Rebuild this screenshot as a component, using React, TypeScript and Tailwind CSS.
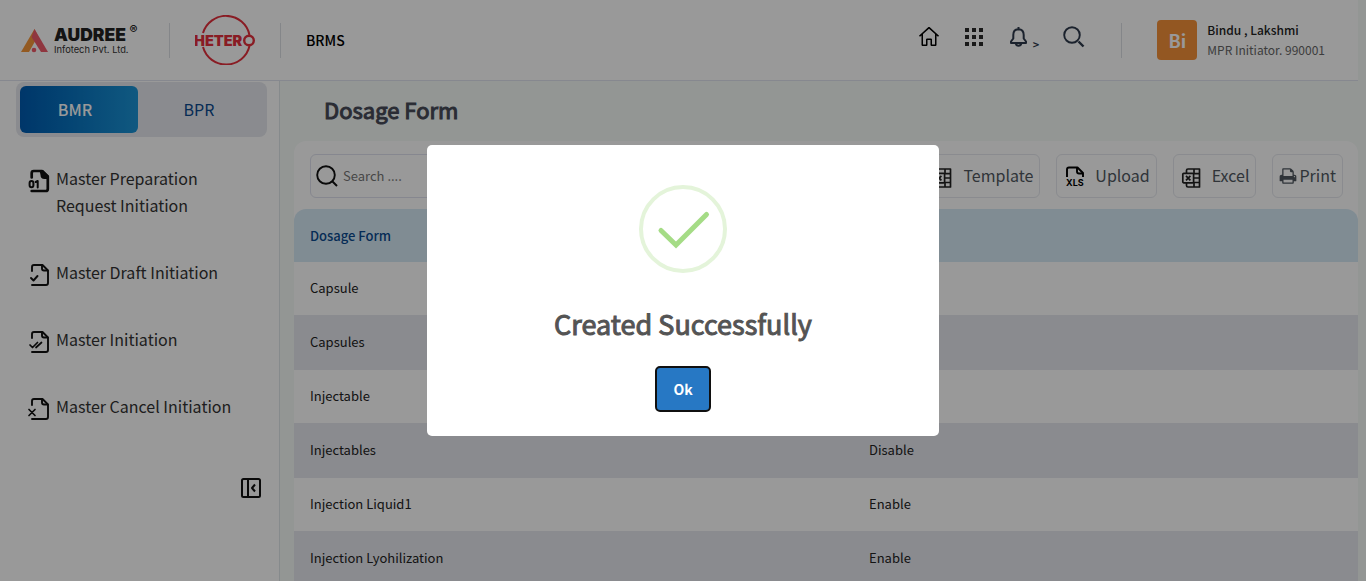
import type { ReactNode } from "react";
import { VscHome } from "react-icons/vsc";

const rows = [
  ["Capsule", "Enable"],
  ["Capsules", "Enable"],
  ["Injectable", "Enable"],
  ["Injectables", "Disable"],
  ["Injection Liquid1", "Enable"],
  ["Injection Lyohilization", "Enable"],
];

function FileIcon({ children, bold = false }: { children: ReactNode; bold?: boolean }) {
  return (
    <svg viewBox="0 0 24 24" className="mt-1 -mb-1 size-6 shrink-0 overflow-visible" fill="none" stroke="#111" strokeWidth="1.9" strokeLinejoin="round" strokeLinecap="round">
      {bold ? (
        <>
          <path d="M3.700 8.500V4Q3.700 2 5.700 2H14l5.800 5.500V20q0 2-2 2H3.700" strokeWidth="2.700" />
          <path d="M11.500 1H15L21 7v3h-4.500Q12.500 10 12.500 6Z" fill="#111" stroke="none" />
        </>
      ) : (
        <>
          <path d="M4 8V4Q4 2 6 2H14.500l5.500 5.500V20q0 2-2 2H4" />
          <path d="M14 2.500v3Q14 7.500 16 7.500H19.500" />
        </>
      )}
      {children}
    </svg>
  );
}

function ExcelIcon() {
  return (
    <svg viewBox="0 0 24 24" className="size-6" fill="none" stroke="#222" strokeWidth="1.7" strokeLinejoin="round">
      <path d="M6.500 9V6.500q0-1.500 1.500-1.500H19.500V23H8q-1.500 0-1.500-1.500V19" />
      <rect x="2.800" y="9.300" width="10.800" height="9.500" rx="1" />
      <path d="M14 5v4.500M14 18.500V23M13.600 9.600h5.900M13.600 14h5.900M13.600 18.500h5.900" />
      <path d="m6 11.800 4.400 4.500m0-4.500L6 16.300" />
    </svg>
  );
}

function XlsIcon() {
  return (
    <svg viewBox="0 0 24 24" className="size-6" fill="none" stroke="#000" strokeWidth="1.9" strokeLinejoin="round">
      <path d="M4 13V5.500Q4 3.500 6 3.500h8.500L20 9v4" />
      <path d="M14 3.500v4Q14 9.500 16 9.500h4" />
      <text x="3" y="22" fontFamily="Inter, sans-serif" fontWeight="700" fontSize="9" fill="#000" stroke="none">XLS</text>
    </svg>
  );
}

function PrintIcon() {
  return (
    <svg viewBox="0 0 1792 1792" className="size-[18px]" fill="currentColor">
      <path d="M448 1536h896v-256h-896v256zm0-640h896v-384h-160q-40 0-68-28t-28-68v-160h-640v640zm1152 64q0-26-19-45t-45-19-45 19-19 45 19 45 45 19 45-19 19-45zm128 0v416q0 13-9.500 22.500t-22.500 9.500h-224v160q0 40-28 68t-68 28h-960q-40 0-68-28t-28-68v-160h-224q-13 0-22.500-9.500t-9.500-22.500v-416q0-79 56.500-135.500t135.500-56.500h64v-544q0-40 28-68t68-28h672q40 0 88 20t76 48l152 152q28 28 48 76t20 88v256h64q79 0 135.500 56.500t56.500 135.500z" />
    </svg>
  );
}

function NavItem({ icon, children }: { icon: ReactNode; children: ReactNode }) {
  return (
    <li>
      <a href="#" className="flex items-start gap-1 text-base leading-[27px] text-[#333]">
        {icon}
        <span>{children}</span>
      </a>
    </li>
  );
}

function ToolButton({ icon, children, tight = false }: { icon: ReactNode; children: ReactNode; tight?: boolean }) {
  return (
    <button className={`flex h-11 items-center rounded-md border border-[#e6e8ee] px-1.5 text-base text-[#505860] ${tight ? "gap-0.5" : "gap-2"}`}>
      {icon}
      <span className="pb-0.5">{children}</span>
    </button>
  );
}

function AudreeLogo() {
  return (
    <svg viewBox="0 0 120 36" className="h-9 w-[120px]" role="img" aria-label="Audree Infotech">
      <path d="M14.500 7 1 30h8l9-16Z" fill="#f5973a" />
      <path d="M14.500 7 28 30h-7L11.500 15Z" fill="#ef5a6a" />
      <circle cx="14" cy="28" r="2.300" fill="#ef5a6a" />
      <text x="34" y="19" fontFamily="Inter, sans-serif" fontWeight="900" fontSize="17.500" fill="#222">AUDREE</text>
      <text x="34" y="31" fontFamily="Inter, sans-serif" fontSize="9.300" fill="#333">Infotech Pvt. Ltd.</text>
      <text x="109.500" y="11.500" fontFamily="Inter, sans-serif" fontWeight="600" fontSize="12" fill="#222">®</text>
    </svg>
  );
}

function HeteroLogo() {
  return (
    <svg viewBox="0 0 60 50" className="h-[50px] w-[60px]" role="img" aria-label="Hetero">
      <g fill="none" stroke="#e5303c" strokeWidth="2">
        <path d="M8 18A24 24 0 0 1 54.500 20M8 32A24 24 0 0 0 54.500 31" />
        <circle cx="54" cy="25.500" r="4.800" strokeWidth="2.400" />
      </g>
      <text x="-1" y="30.700" fontFamily="Inter, sans-serif" fontWeight="900" fontSize="14.500" fill="#e5303c">HETER</text>
    </svg>
  );
}

export default function App() {
  return (
    <div className="flex h-screen flex-col overflow-hidden bg-[#f5faf7] pr-2 font-['Noto_Sans_CJK_SC',sans-serif] text-[#222]">
      <header className="flex h-[81px] shrink-0 items-center border-b border-[#e0e3ee] bg-white pl-5">
        <AudreeLogo />
        <span className="ml-[29px] h-[35px] w-px bg-[#dcdfe4]" />
        <span className="ml-[25px]"><HeteroLogo /></span>
        <span className="ml-[25px] h-[35px] w-px bg-[#dcdfe4]" />
        <span className="ml-[25px] text-sm font-medium text-black">BRMS</span>
        <nav className="ml-auto flex items-center">
          <button aria-label="Home"><VscHome className="-mt-1.5 size-6 text-black" /></button>
          <button aria-label="Apps" className="ml-6">
            <svg viewBox="0 0 18 18" className="-mt-1.5 size-[18px]" fill="#2b2b2b">
              {[0, 7, 14].flatMap((y) => [0, 7, 14].map((x) => <rect key={`${x}-${y}`} x={x} y={y} width="4" height="4" />))}
            </svg>
          </button>
          <button aria-label="Notifications" className="ml-6 flex items-end gap-1 text-[#2e3a4c]">
            <svg viewBox="0 0 22 22" className="mb-1.5 size-[22px]" fill="none" stroke="currentColor" strokeWidth="2" strokeLinejoin="round">
              <path d="M11.500 3.200C8 3.200 6.300 5.600 6.300 9v3.500L4 15.500v1.400h15v-1.400l-2.300-3V9c0-3.400-1.700-5.800-5.200-5.800Z" />
              <path d="M11.500 1v2M8.700 17.500c.6 2.900 5 2.900 5.600 0" />
            </svg>
            <span className="pb-1 text-[11px] leading-3 font-bold">&gt;</span>
          </button>
          <button aria-label="Search" className="ml-6">
            <svg viewBox="0 0 22 22" className="-mt-1.5 size-[22px]" fill="none" stroke="#2e3a4c">
              <circle cx="9" cy="9" r="7.800" strokeWidth="1.900" />
              <path d="m15.500 15.500 5 5" strokeWidth="2.400" />
            </svg>
          </button>
        </nav>
        <span className="ml-9 h-[35px] w-px bg-[#dcdfe4]" />
        <div className="mr-[33px] ml-[35px] flex items-center gap-2.5">
          <span className="flex size-10 items-center justify-center rounded bg-[#f5923a] text-lg font-bold text-white">Bi</span>
          <div className="text-xs leading-5">
            <div className="font-medium text-[#222]">Bindu , Lakshmi</div>
            <div className="text-[#666]">MPR Initiator. 990001</div>
          </div>
        </div>
      </header>

      <div className="flex min-h-0 flex-1">
        <aside className="w-[280px] shrink-0 border-r border-[#e0e7ea] bg-white pt-px">
          <div className="mr-3 ml-4 flex h-[55px] rounded-lg bg-[#e6e8ee] p-1">
            <button className="w-[118px] rounded-md bg-linear-to-r from-[#005bb0] to-[#1b94d6] pr-2 pb-0.5 font-medium text-white">BMR</button>
            <button className="w-[122px] pb-0.5 text-[#0b4a8f]">BPR</button>
          </div>
          <ul className="mt-7 ml-7 w-52 space-y-10">
            <NavItem
              icon={
                <FileIcon bold>
                  <rect x="1.600" y="12" width="3.800" height="6.200" rx="1.900" strokeWidth="2" />
                  <path d="m7.700 13 2-1v6.500" strokeWidth="2" />
                </FileIcon>
              }
            >
              Master Preparation Request Initiation
            </NavItem>
            <NavItem icon={<FileIcon><path d="m3 15 2.500 2.500L9.500 13" /></FileIcon>}>Master Draft Initiation</NavItem>
            <NavItem icon={<FileIcon><path d="m2 15 2.500 2.500L9.500 12.500M8 17.500l5.500-5" strokeWidth="1.700" /></FileIcon>}>Master Initiation</NavItem>
            <NavItem icon={<FileIcon><path d="m1 12.500 6 6m0-6-6 6" strokeWidth="1.700" /></FileIcon>}>Master Cancel Initiation</NavItem>
          </ul>
          <div className="mt-14 flex justify-end pr-4">
            <button aria-label="Collapse menu">
              <svg viewBox="0 0 24 24" className="size-6" fill="none" stroke="#111" strokeWidth="2" strokeLinejoin="round">
                <rect x="3" y="3" width="18" height="18" rx="1.500" />
                <path d="M9 3v18m7-12.500L13 12l3 3.500" />
              </svg>
            </button>
          </div>
        </aside>

        <main className="min-w-0 flex-1 pl-3.5">
          <h1 className="pb-1 pl-[30px] text-[22px] leading-[56px] text-[#474a58] [-webkit-text-stroke:1px]">Dosage Form</h1>
          <section className="rounded-t-xl bg-white">
            <div className="flex items-center gap-4 pt-[13px] pr-[15px] pb-[11px] pl-4">
              <label className="mr-auto flex h-11 w-72 items-center gap-1 rounded-md border border-[#e0e2ee] px-1">
                <svg viewBox="0 0 24 24" className="size-6 shrink-0" fill="none" stroke="#111" strokeWidth="1.900">
                  <circle cx="11" cy="11" r="8.800" />
                  <path d="m17 17 5 5" />
                </svg>
                <input aria-label="Search" placeholder="Search ...." className="w-full min-w-0 text-[13px] outline-none placeholder:text-[#777]" />
              </label>
              <ToolButton icon={<ExcelIcon />}>Template</ToolButton>
              <ToolButton icon={<XlsIcon />}>Upload</ToolButton>
              <ToolButton icon={<ExcelIcon />}>Excel</ToolButton>
              <ToolButton tight icon={<PrintIcon />}>Print</ToolButton>
            </div>
            <table className="w-full table-fixed border-separate border-spacing-0 text-left text-[13px]">
              <thead>
                <tr className="h-[53px] text-[#0b4a8f]">
                  <th className="w-[559px] rounded-tl-xl bg-[#d6eaf6] px-4 font-medium">Dosage Form</th>
                  <th className="rounded-tr-xl bg-[#d6eaf6] px-4 font-medium">Status</th>
                </tr>
              </thead>
              <tbody>
                {rows.map(([name, status]) => (
                  <tr key={name} className="h-[54px] even:bg-[#e6e8ee]">
                    <td className="border-b border-[#e6e8ee] px-4 pb-0.5">{name}</td>
                    <td className="border-b border-[#e6e8ee] px-4 pb-0.5">{status}</td>
                  </tr>
                ))}
              </tbody>
            </table>
          </section>
        </main>
      </div>

      <div className="fixed inset-0 z-10 flex items-center justify-center bg-black/40">
        <div role="dialog" aria-modal="true" aria-labelledby="result" className="flex w-full max-w-lg flex-col items-center rounded-[5px] bg-white pt-10 pb-6">
          <svg viewBox="0 0 88 88" className="size-[88px]" fill="none">
            <circle cx="44" cy="44" r="42" stroke="#e4f4da" strokeWidth="4" />
            <path d="m22 45.500 15 14.500L67.500 29.500" stroke="#a5dc86" strokeWidth="5" strokeLinecap="round" />
          </svg>
          <h2 id="result" className="mt-[31px] text-[27px] leading-10 text-[#545454] [-webkit-text-stroke:1px]">Created Successfully</h2>
          <button className="mt-[22px] h-[46px] w-14 rounded-[5px] border-2 border-[#101010] bg-[#2778c4] text-sm font-bold text-white">Ok</button>
        </div>
      </div>
    </div>
  );
}
